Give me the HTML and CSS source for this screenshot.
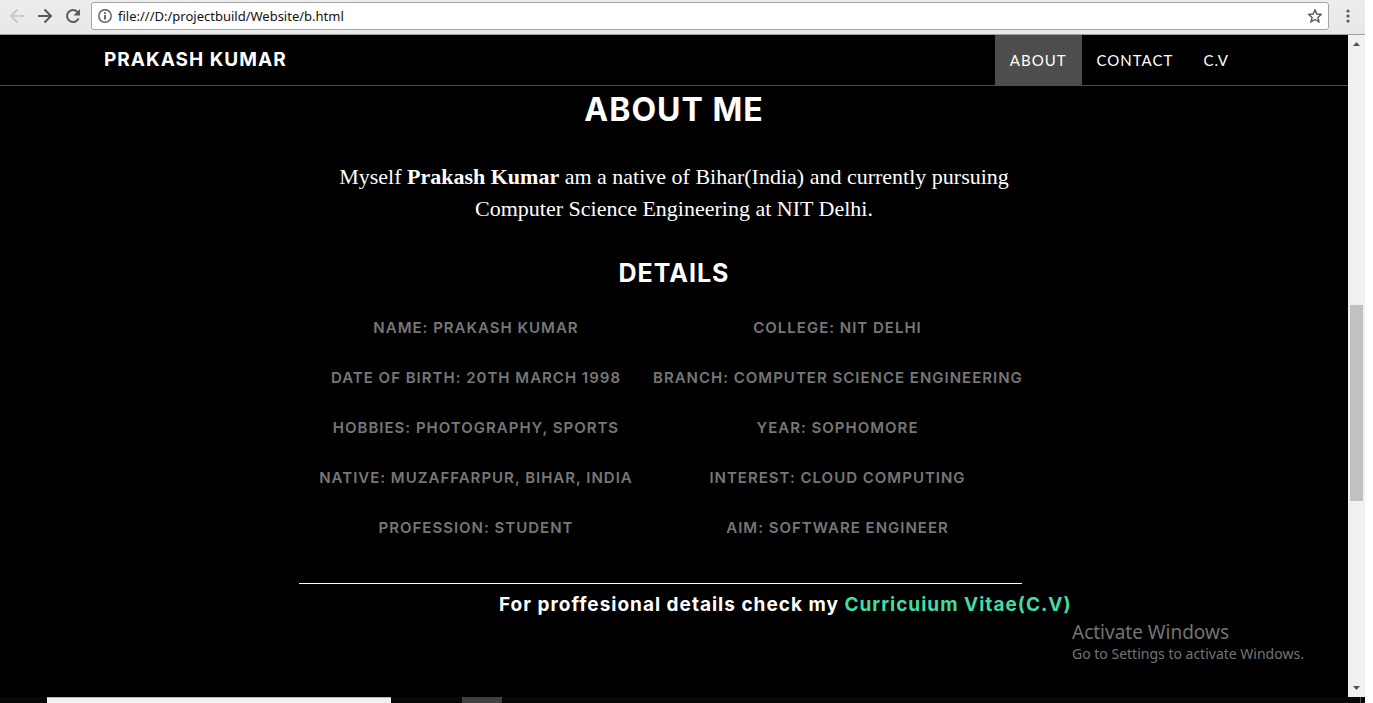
FILE: index.html
```html
<!DOCTYPE html>
<html lang="en">
<head>
<meta charset="utf-8">
<title>Prakash Kumar</title>
<link rel="stylesheet" href="styles.css">
</head>
<body>
<div class="window">
  <div class="toolbar">
    <button class="tool" aria-label="Back" disabled>
      <svg width="16" height="16" viewBox="0 0 16 16"><path d="M15 8H2.500M8.500 1.500 2 8l6.500 6.500" fill="none" stroke="#cacaca" stroke-width="2"/></svg>
    </button>
    <button class="tool" aria-label="Forward">
      <svg width="16" height="16" viewBox="0 0 16 16"><path d="M1 8h12.500M7.500 1.500 14 8l-6.500 6.500" fill="none" stroke="#5a5a5a" stroke-width="2"/></svg>
    </button>
    <button class="tool" aria-label="Reload">
      <svg width="16" height="16" viewBox="0 0 16 16"><path d="M13.600 10.300A6 6 0 1 1 12.500 4" fill="none" stroke="#5a5a5a" stroke-width="2"/><path d="M15 1v6.500H8.500z" fill="#5a5a5a"/></svg>
    </button>
    <div class="address">
      <svg width="14" height="14" viewBox="0 0 14 14"><circle cx="7" cy="7" r="6.200" fill="none" stroke="#5a5a5a" stroke-width="1.400"/><path d="M6.100 6h1.800v4.500H6.100zM6.100 3.300h1.800v1.600H6.100z" fill="#5a5a5a"/></svg>
      <input class="url" type="text" aria-label="Address" value="file:///D:/projectbuild/Website/b.html">
      <button class="star" aria-label="Bookmark">
        <svg width="14" height="14" viewBox="1 1 14 14"><path d="M8 1.800 9.800 6l4.600.4-3.500 3 1.100 4.500L8 11.500l-4 2.400 1.100-4.500-3.500-3L6.200 6z" fill="none" stroke="#5a5a5a" stroke-width="1.400"/></svg>
      </button>
    </div>
    <button class="menu" aria-label="Menu">
      <svg width="4" height="14" viewBox="0 0 4 14"><g fill="#5a5a5a"><circle cx="2" cy="2" r="1.600"/><circle cx="2" cy="7" r="1.600"/><circle cx="2" cy="12" r="1.600"/></g></svg>
    </button>
  </div>
  <div class="view">
    <div class="page">
      <nav class="navbar">
        <div class="container">
          <a class="brand" href="#top">PRAKASH KUMAR</a>
          <div class="links">
            <a class="link active" href="#about">ABOUT</a>
            <a class="link" href="#contact">CONTACT</a>
            <a class="link" href="#cv">C.V</a>
          </div>
        </div>
      </nav>
      <main class="about" id="about">
        <h2 class="title">ABOUT ME</h2>
        <p class="intro">Myself <b>Prakash Kumar</b> am a native of Bihar(India) and currently pursuing Computer Science Engineering at NIT Delhi.</p>
        <h3 class="subtitle">DETAILS</h3>
        <table class="details">
          <tbody>
            <tr><td>NAME: PRAKASH KUMAR</td><td>COLLEGE: NIT DELHI</td></tr>
            <tr><td>DATE OF BIRTH: 20TH MARCH 1998</td><td>BRANCH: COMPUTER SCIENCE ENGINEERING</td></tr>
            <tr><td>HOBBIES: PHOTOGRAPHY, SPORTS</td><td>YEAR: SOPHOMORE</td></tr>
            <tr><td>NATIVE: MUZAFFARPUR, BIHAR, INDIA</td><td>INTEREST: CLOUD COMPUTING</td></tr>
            <tr><td>PROFESSION: STUDENT</td><td>AIM: SOFTWARE ENGINEER</td></tr>
          </tbody>
        </table>
        <h4 class="more">For proffesional details check my <a href="#cv">Curricuium Vitae(C.V)</a></h4>
      </main>
      <div class="activate">
        <div class="activate-title">Activate Windows</div>
        <div class="activate-text">Go to Settings to activate Windows.</div>
      </div>
    </div>
    <div class="scrollbar">
      <svg class="arrow" width="17" height="17" viewBox="0 0 17 17"><path d="M5 11h7L8.500 7z" fill="#505050"/></svg>
      <div class="track"><div class="thumb"></div></div>
      <svg class="arrow" width="17" height="17" viewBox="0 0 17 17"><path d="M5 6h7l-3.500 4z" fill="#505050"/></svg>
    </div>
  </div>
  <div class="taskbar">
    <div class="search"></div>
    <div class="task"></div>
    <div class="peek"></div>
  </div>
</div>
</body>
</html>
```
FILE: styles.css
```css
* { box-sizing: border-box; }
body { margin: 0; background: #fff; color: #fff; }
button { border: 0; padding: 0; background: none; display: flex; }
a { color: inherit; text-decoration: none; }
svg { display: block; flex: none; }

.window { display: flex; flex-direction: column; min-height: 100vh; margin-right: 8px; }

.toolbar { display: flex; align-items: center; height: 35px; padding: 0 15px 3px 9px; background: linear-gradient(#ededed, #e8e8e8); border-bottom: 1px solid #a0a0a0; }
.tool { margin-right: 12px; }
.address { flex: 1; display: flex; align-items: center; height: 28px; margin-left: -2px; padding: 0 6px; background: #fff; border: 1px solid #a5a5a5; border-radius: 3px; }
.url { flex: 1; min-width: 0; border: 0; outline: 0; padding: 0 6px; background: none; color: #111; font: 13px "Noto Sans", sans-serif; }
.menu { margin-left: 17px; }

.view { flex: 1; display: flex; }
.page { flex: 1; position: relative; background: #000; }

.navbar { border-bottom: 1px solid #4d4d4d; }
.container { display: flex; justify-content: space-between; align-items: center; max-width: 1170px; margin: 0 auto; padding: 0 15px; }
.brand { font: 700 19px/50px Inter, sans-serif; letter-spacing: 1px; }
.links { display: flex; }
.link { padding: 0 15px; font: 400 15px/50px Lato, sans-serif; letter-spacing: 1px; }
.active { background: #4d4d4d; }

.about { max-width: 750px; margin: 0 auto; padding-top: 6px; text-align: center; }
.title { margin: 0 0 34px; font: 700 32px/35px Inter, sans-serif; letter-spacing: 1px; }
.intro { margin: 0 0 35px; padding: 0 30px; font: 22px/32px "Liberation Serif", serif; }
.subtitle { margin: 0 0 17px; font: 700 25px/26px Inter, sans-serif; letter-spacing: 1px; }
.details { width: 723px; table-layout: fixed; border-collapse: collapse; border-bottom: 1px solid #fff; }
.details td { height: 50px; padding: 0; color: #777; font: 600 15px/20px Inter, sans-serif; letter-spacing: 1px; white-space: nowrap; }
.details td:first-child { width: 354px; }
.details tr:last-child td { height: 80px; padding-bottom: 30px; }
.more { margin: 11px 0 0 200px; font: 700 19px/20px Inter, sans-serif; letter-spacing: 1px; text-align: left; white-space: nowrap; }
.more a { color: #42dca3; }

.activate { position: absolute; right: 40px; bottom: 33px; min-width: 236px; color: #747474; font-family: "Noto Sans", sans-serif; }
.activate-title { font-size: 19px; line-height: 24px; }
.activate-text { font-size: 14px; line-height: 20px; }

.scrollbar { display: flex; flex-direction: column; width: 17px; background: #f1f1f1; }
.track { flex: 1; display: flex; flex-direction: column; padding-top: 253px; }
.thumb { height: 196px; margin: 0 2px; background: #c1c1c1; }

.taskbar { display: flex; height: 6px; padding-left: 47px; background: #080808; }
.search { width: 344px; background: #f2f2f2; border-top: 1px solid #b5b5b5; }
.task { width: 40px; margin-left: 71px; background: #414141; }
.peek { width: 5px; margin-left: auto; border-left: 1px solid #555; }
```
